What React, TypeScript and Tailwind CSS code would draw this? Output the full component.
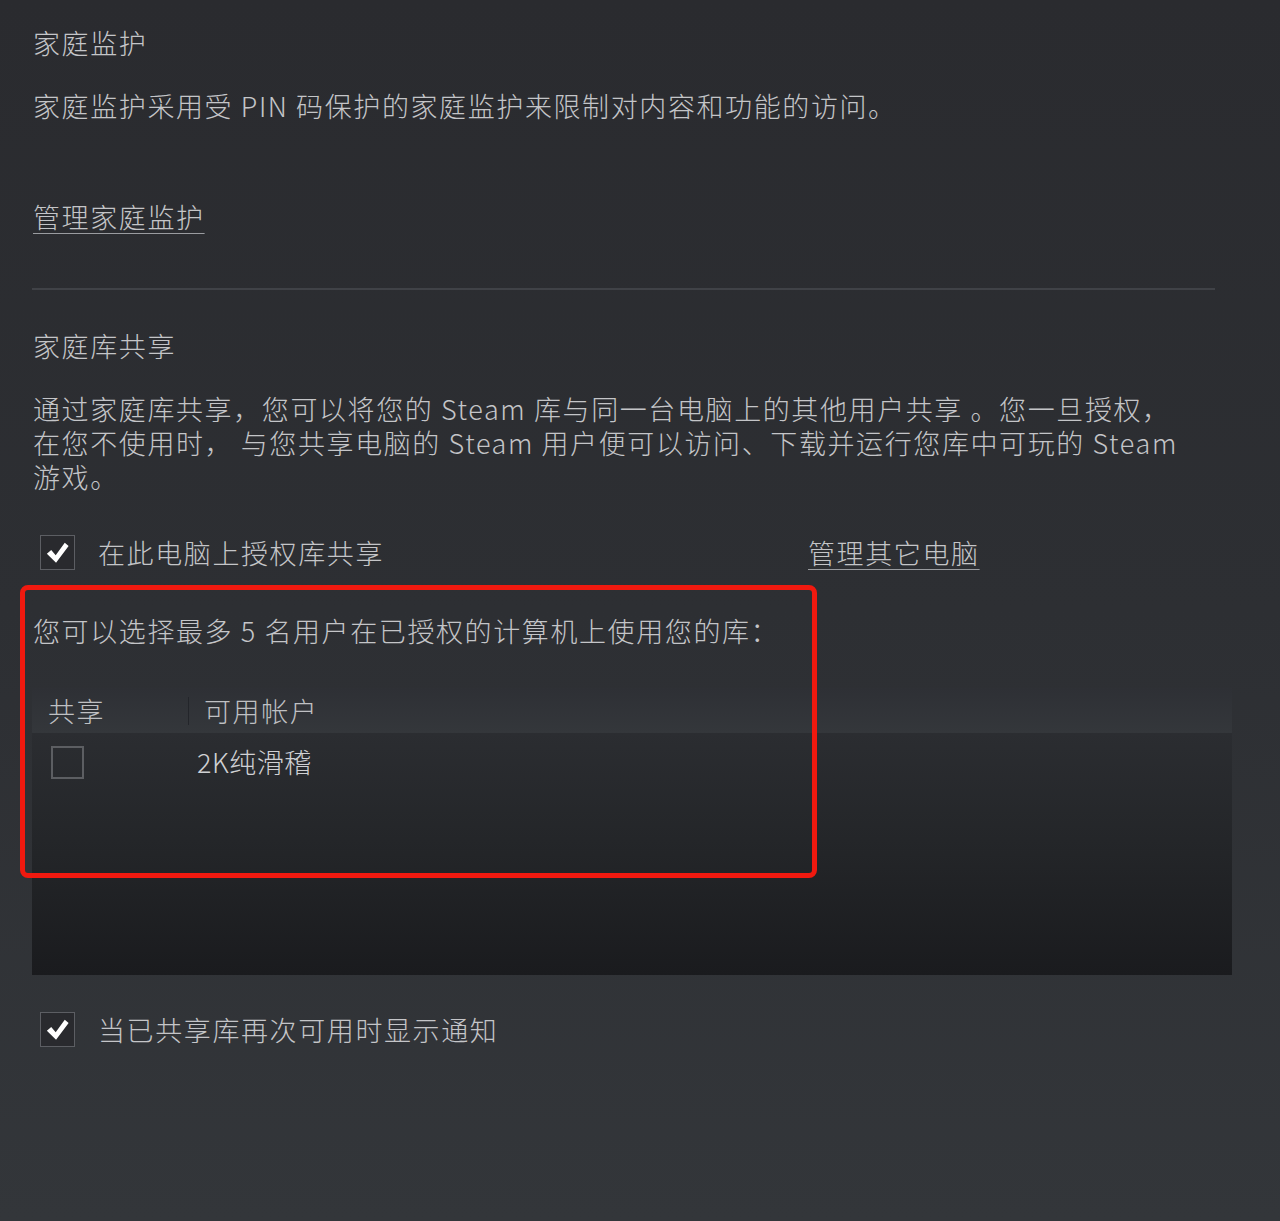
import React from "react";

const CheckMark = () => (
  <svg viewBox="0 0 24 24" className="w-[29px] h-[29px]">
    <path d="M3.2 13 L6.8 9.9 L10.5 14.2 L18 4 L21.2 6.6 L10.8 20.4 Z" fill="#ffffff" />
  </svg>
);

const CheckBox = ({ checked }: { checked: boolean }) => (
  <div className="w-[35px] h-[35px] shrink-0 border border-[#5c5e63] bg-[#292a2e] flex items-center justify-center">
    {checked && <CheckMark />}
  </div>
);

const App = () => {
  return (
    <div
      className="relative w-full min-h-[1221px] px-[33px] bg-gradient-to-b from-[#2a2b2f] via-[#2d2f33] to-[#33363a] text-[#c4c5c8] text-[27px] leading-[34px] tracking-[1.6px] font-light"
      style={{ fontFamily: '"Noto Sans CJK SC", "Noto Sans", sans-serif' }}
    >
      <h2 className="pt-[26px] font-light">家庭监护</h2>
      <p className="mt-[29px]">家庭监护采用受 PIN 码保护的家庭监护来限制对内容和功能的访问。</p>
      <div className="mt-[77px]">
        <a className="underline underline-offset-[5px] decoration-1 decoration-[#9a9ca0] cursor-pointer">管理家庭监护</a>
      </div>
      <div className="mt-[54px] -ml-px w-[1183px] h-[2px] bg-[#404247]" />

      <h2 className="mt-[39px] font-light">家庭库共享</h2>
      <p className="mt-[29px]">
        通过家庭库共享，您可以将您的 Steam 库与同一台电脑上的其他用户共享 。您一旦授权，
        <br />
        在您不使用时， 与您共享电脑的 Steam 用户便可以访问、下载并运行您库中可玩的 Steam
        <br />
        游戏。
      </p>

      <div className="mt-[41px] flex items-center">
        <div className="w-[775px] flex items-center gap-[23px] pl-[7px]">
          <CheckBox checked />
          <span>在此电脑上授权库共享</span>
        </div>
        <a className="underline underline-offset-[5px] decoration-1 decoration-[#9a9ca0] cursor-pointer">管理其它电脑</a>
      </div>

      <p className="mt-[44px]">您可以选择最多 5 名用户在已授权的计算机上使用您的库：</p>

      <div className="mt-[40px] -ml-px w-[1200px]">
        <div className="h-[45px] flex items-center bg-gradient-to-b from-[#2e3035] to-[#34373b] text-[#bfc0c3]">
          <div className="w-[156px] pl-[16px]">共享</div>
          <div className="w-px h-[28px] bg-[#23252a]" />
          <div className="pl-[15px]">可用帐户</div>
        </div>
        <div className="h-[242px] bg-gradient-to-b from-[#2b2d31] via-[#232528] to-[#1a1b1e] pt-[12px]">
          <div className="flex items-center">
            <div className="w-[165px] pl-[19px]">
              <div className="w-[33px] h-[33px] border-2 border-[#5c5e62]" />
            </div>
            <span className="text-[#d0d1d4] tracking-[0.5px]">2K纯滑稽</span>
          </div>
        </div>
      </div>

      <div className="mt-[37px] flex items-center gap-[23px] pl-[7px]">
        <CheckBox checked />
        <span>当已共享库再次可用时显示通知</span>
      </div>

      <div className="absolute left-[20px] top-[585px] w-[797px] h-[293px] border-[5px] border-[#f0190f] rounded-[8px] pointer-events-none" />
    </div>
  );
};

export default App;
